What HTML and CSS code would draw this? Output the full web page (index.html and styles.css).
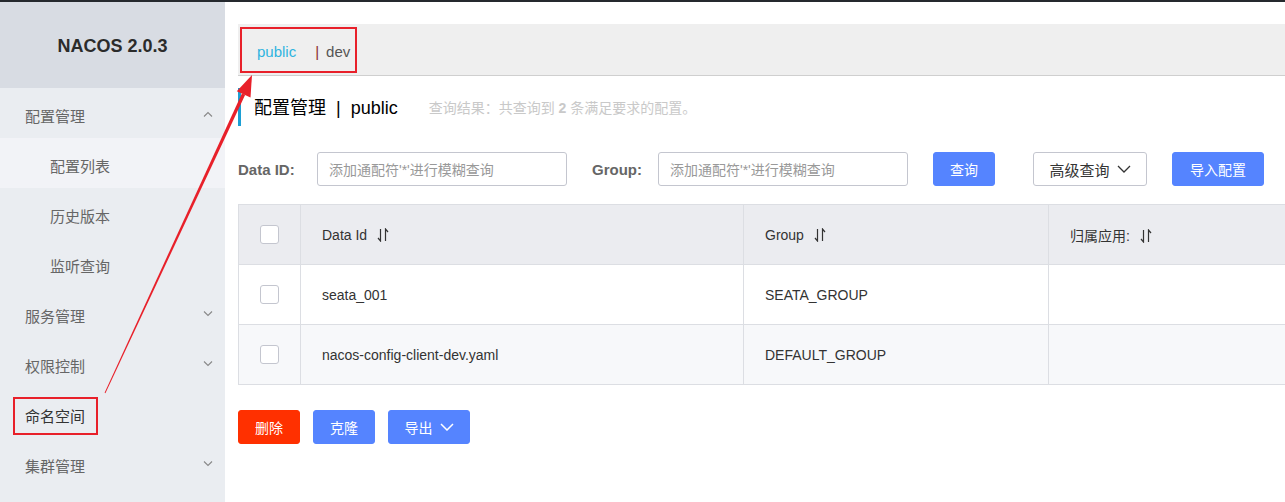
FILE: index.html
```html
<!DOCTYPE html>
<html lang="zh-CN">
<head>
<meta charset="utf-8">
<title>NACOS</title>
<link rel="stylesheet" href="styles.css">
</head>
<body>
<div class="topbar"></div>
<div class="layout">
  <aside class="sidebar">
    <div class="brand">NACOS 2.0.3</div>
    <ul class="menu">
      <li class="menu-item">配置管理
        <svg class="chev" width="10" height="6" viewBox="0 0 10 6"><path d="M1 5.5 L5 1.5 L9 5.5" fill="none" stroke="#888" stroke-width="1.1"/></svg>
      </li>
      <li class="menu-sub active">配置列表</li>
      <li class="menu-sub">历史版本</li>
      <li class="menu-sub">监听查询</li>
      <li class="menu-item">服务管理
        <svg class="chev" width="10" height="6" viewBox="0 0 10 6"><path d="M1 0.5 L5 4.5 L9 0.5" fill="none" stroke="#888" stroke-width="1.1"/></svg>
      </li>
      <li class="menu-item">权限控制
        <svg class="chev" width="10" height="6" viewBox="0 0 10 6"><path d="M1 0.5 L5 4.5 L9 0.5" fill="none" stroke="#888" stroke-width="1.1"/></svg>
      </li>
      <li class="menu-item dark">命名空间</li>
      <li class="menu-item">集群管理
        <svg class="chev" width="10" height="6" viewBox="0 0 10 6"><path d="M1 0.5 L5 4.5 L9 0.5" fill="none" stroke="#888" stroke-width="1.1"/></svg>
      </li>
    </ul>
  </aside>

  <main class="main">
    <div class="ns-bar">
      <span class="ns-current">public</span>
      <span class="ns-sep">|</span>
      <span class="ns-other">dev</span>
    </div>

    <div class="title-row">
      <span class="title">配置管理&nbsp;&nbsp;|&nbsp;&nbsp;public</span>
      <span class="result">查询结果：共查询到 <b>2</b> 条满足要求的配置。</span>
    </div>

    <div class="search-row">
      <label class="field-label label-id">Data ID:</label>
      <div class="input">添加通配符'*'进行模糊查询</div>
      <label class="field-label label-group">Group:</label>
      <div class="input">添加通配符'*'进行模糊查询</div>
      <button class="btn primary btn-query">查询</button>
      <button class="btn normal btn-adv">高级查询
        <svg width="14" height="8" viewBox="0 0 14 8"><path d="M1 1 L7 7 L13 1" fill="none" stroke="#333" stroke-width="1.3"/></svg>
      </button>
      <button class="btn primary btn-import">导入配置</button>
    </div>

    <table class="grid">
      <colgroup>
        <col class="c-check"><col class="c-id"><col class="c-group"><col class="c-app">
      </colgroup>
      <thead>
        <tr>
          <th><span class="checkbox"></span></th>
          <th>Data Id <svg class="sort" width="12" height="14" viewBox="0 0 12 14"><path d="M3.5 1 V13 L1 10 M8.5 13 V1 L11 4" fill="none" stroke="#333" stroke-width="1.2"/></svg></th>
          <th>Group <svg class="sort" width="12" height="14" viewBox="0 0 12 14"><path d="M3.5 1 V13 L1 10 M8.5 13 V1 L11 4" fill="none" stroke="#333" stroke-width="1.2"/></svg></th>
          <th>归属应用: <svg class="sort" width="12" height="14" viewBox="0 0 12 14"><path d="M3.5 1 V13 L1 10 M8.5 13 V1 L11 4" fill="none" stroke="#333" stroke-width="1.2"/></svg></th>
        </tr>
      </thead>
      <tbody>
        <tr>
          <td><span class="checkbox"></span></td>
          <td>seata_001</td>
          <td>SEATA_GROUP</td>
          <td></td>
        </tr>
        <tr class="alt">
          <td><span class="checkbox"></span></td>
          <td>nacos-config-client-dev.yaml</td>
          <td>DEFAULT_GROUP</td>
          <td></td>
        </tr>
      </tbody>
    </table>

    <div class="actions">
      <button class="btn danger btn-del">删除</button>
      <button class="btn primary btn-clone">克隆</button>
      <button class="btn primary btn-export">导出
        <svg width="14" height="8" viewBox="0 0 14 8"><path d="M1 1 L7 7 L13 1" fill="none" stroke="#fff" stroke-width="1.5"/></svg>
      </button>
    </div>
  </main>
</div>

<div class="mark mark-ns"></div>
<div class="mark mark-menu"></div>
<svg class="arrow" width="1285" height="502" viewBox="0 0 1285 502">
  <polygon points="245.2,94.8 241.9,93.4 104.6,392.8 105.4,393.2" fill="#e8202a"/>
  <polygon points="252,75 250.5,97.6 236.8,91.2" fill="#e8202a"/>
</svg>
</body>
</html>
```

FILE: styles.css
```css
* { box-sizing: border-box; }

html, body {
  margin: 0;
  padding: 0;
  width: 1285px;
  height: 502px;
  overflow: hidden;
  background: #fff;
  font-family: "Liberation Sans", "Noto Sans CJK SC", sans-serif;
  font-size: 14px;
  color: #333;
}

.topbar {
  height: 2px;
  background: #25292e;
}

.layout {
  display: flex;
  height: 500px;
}

/* Sidebar */
.sidebar {
  width: 225px;
  flex: 0 0 225px;
  background: #eaedf1;
}

.brand {
  height: 86px;
  background: #d8dce3;
  display: flex;
  align-items: center;
  justify-content: center;
  font-size: 18px;
  font-weight: bold;
  color: #2b2b2b;
  padding-top: 2px;
}

.menu {
  list-style: none;
  margin: 0;
  padding: 0;
}

.menu-item,
.menu-sub {
  height: 50px;
  display: flex;
  align-items: center;
  padding-top: 5px;
  color: #666;
  font-size: 15px;
}

.menu-item {
  padding-left: 25px;
  padding-right: 12px;
  justify-content: space-between;
}

.menu-item.dark { color: #333; }

.menu-sub {
  padding-left: 50px;
}

.menu-sub.active {
  background: #f2f3f7;
}

.chev { display: block; margin-top: -4px; }

/* Main */
.main {
  flex: 1;
  min-width: 0;
  overflow: hidden;
  padding: 22px 0 0 13px;
}

.ns-bar {
  height: 52px;
  background: #efefef;
  border-bottom: 1px solid #cfcfcf;
  display: flex;
  align-items: center;
  padding-left: 19px;
  padding-top: 3px;
  font-size: 15px;
}

.ns-current { color: #2fb4df; }
.ns-sep { color: #8a2e2e; margin-left: 19px; }
.ns-other { color: #555; margin-left: 7px; }

.title-row {
  margin-top: 12px;
  height: 38px;
  border-left: 3px solid #1c9fd4;
  display: flex;
  align-items: center;
  padding-left: 13px;
}

.title {
  font-size: 18px;
  color: #000;
  margin-top: -2px;
}

.result {
  margin-left: 31px;
  color: #c9c9c9;
  font-size: 14px;
}
.result b { font-weight: bold; }

.search-row {
  margin-top: 26px;
  display: flex;
  align-items: center;
  height: 34px;
}

.field-label {
  font-weight: bold;
  color: #666;
  font-size: 15px;
  margin-right: 16px;
  white-space: nowrap;
  flex-shrink: 0;
}

.label-id { width: 63px; }
.label-group { width: 50px; }

.input {
  flex-shrink: 0;
  width: 250px;
  height: 34px;
  border: 1px solid #c4c6cf;
  border-radius: 3px;
  padding-left: 11px;
  display: flex;
  align-items: center;
  color: #999;
  margin-right: 25px;
}

.btn {
  flex-shrink: 0;
  height: 34px;
  border-radius: 3px;
  font-family: inherit;
  font-size: 14px;
  display: inline-flex;
  align-items: center;
  justify-content: center;
  gap: 7px;
  padding: 0;
  cursor: pointer;
}

.btn.primary { background: #5584ff; border: 1px solid #5584ff; color: #fff; }
.btn.danger { background: #ff3000; border: 1px solid #ff3000; color: #fff; }
.btn.normal { background: #fff; border: 1px solid #c4c6cf; color: #333; }

.btn-query { width: 62px; margin-right: 38px; }
.btn-adv { width: 114px; margin-right: 25px; font-size: 15px; }
.btn-import { width: 92px; }

/* Table */
.grid {
  margin-top: 18px;
  width: 1120px;
  table-layout: fixed;
  border-collapse: collapse;
  border: 1px solid #dcdee3;
}

.c-check { width: 62px; }
.c-id { width: 443px; }
.c-group { width: 305px; }

.grid th,
.grid td {
  height: 59px;
  border: 1px solid #dcdee3;
  padding: 0 0 0 21px;
  text-align: left;
  font-weight: normal;
  color: #333;
  vertical-align: middle;
}

.grid th:first-child,
.grid td:first-child {
  padding: 0;
  text-align: center;
}

.grid thead tr { background: #ebecf0; }
.grid thead th { height: 60px; }
.grid tbody td { height: 60px; }
.grid tbody tr { background: #fff; }
.grid tbody tr.alt { background: #f7f8fa; }

.sort { vertical-align: -2px; margin-left: 6px; }

.checkbox {
  display: inline-block;
  width: 19px;
  height: 19px;
  border: 1px solid #c4c6cf;
  border-radius: 3px;
  background: #fff;
  vertical-align: middle;
}

.actions {
  margin-top: 25px;
  display: flex;
  gap: 13px;
}

.btn-del, .btn-clone { width: 62px; }
.btn-export { width: 82px; }

/* Annotations */
.mark {
  position: absolute;
  border: 2px solid #e8202a;
}
.mark-ns { left: 240px; top: 27px; width: 117px; height: 46px; }
.mark-menu { left: 13px; top: 397px; width: 85px; height: 38px; }

.arrow {
  position: absolute;
  left: 0;
  top: 0;
  pointer-events: none;
}
```
